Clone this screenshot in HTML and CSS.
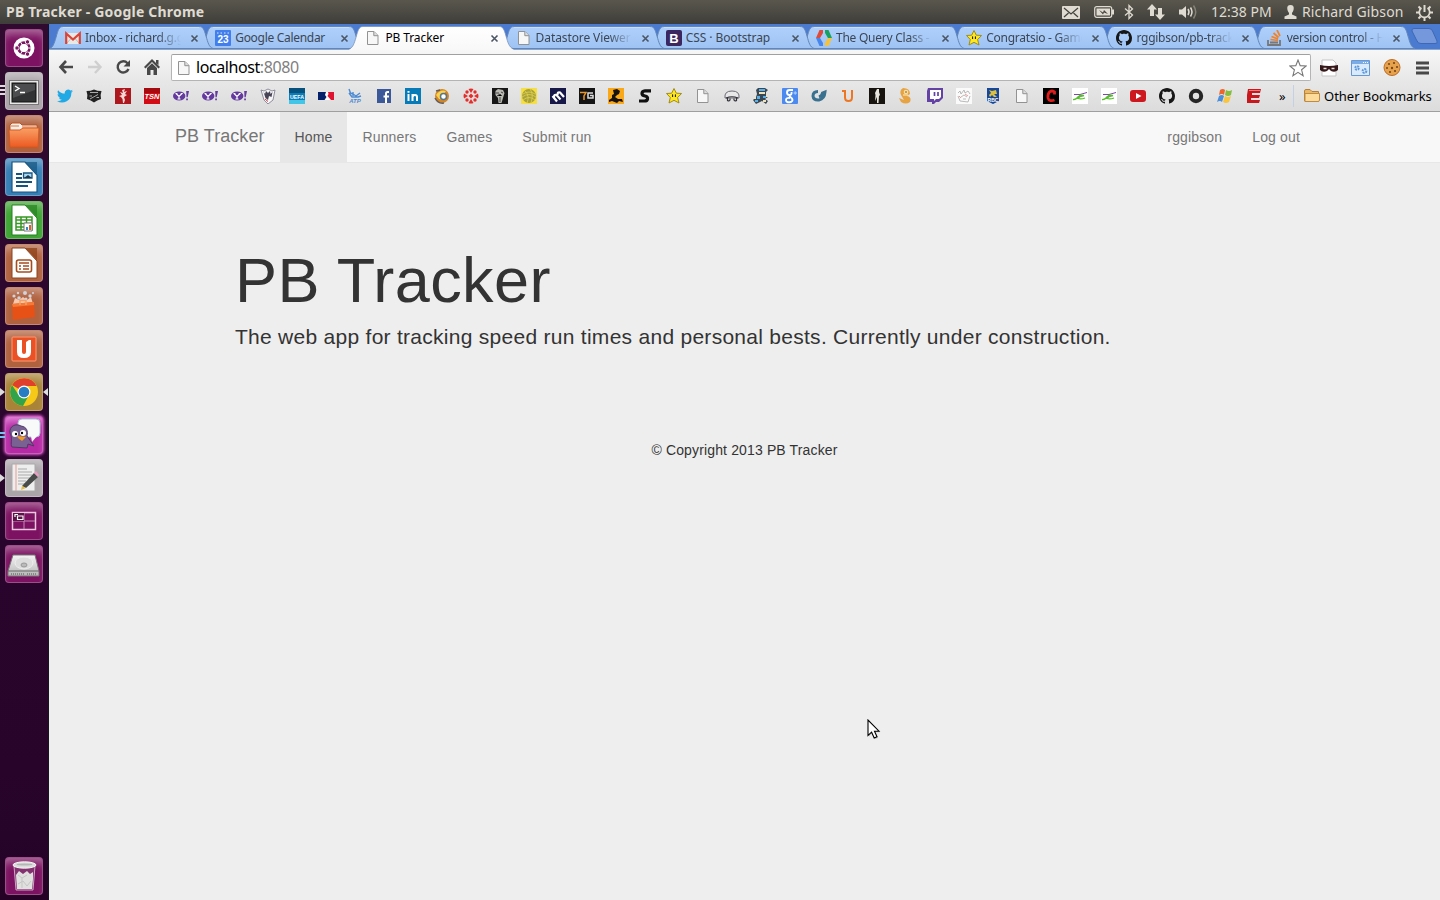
FILE: index.html
```html
<!DOCTYPE html>
<html lang="en">
<head>
<meta charset="utf-8">
<title>PB Tracker</title>
<link rel="stylesheet" href="styles.css">
</head>
<body>
<svg class="defs" width="0" height="0">
  <defs>
    <linearGradient id="tabfill" x1="0" y1="0" x2="0" y2="1"><stop offset="0" stop-color="#b0d0fb"/><stop offset="1" stop-color="#9ec3f3"/></linearGradient>
    <linearGradient id="activefill" x1="0" y1="0" x2="0" y2="1"><stop offset="0" stop-color="#fff"/><stop offset="1" stop-color="#f8f8f8"/></linearGradient>
    <linearGradient id="orange" x1="0" y1="0" x2="0" y2="1"><stop offset="0" stop-color="#f8a065"/><stop offset="1" stop-color="#ed5a22"/></linearGradient>
    <linearGradient id="metal" x1="0" y1="0" x2="0" y2="1"><stop offset="0" stop-color="#f5f5f5"/><stop offset="1" stop-color="#b5b5b5"/></linearGradient>
  </defs>
  <symbol id="tab" viewBox="0 0 166 25"><path d="M1 23.500C4 22 5 19 7 12.500C9 5 10 1.500 14 1.500H150C154 1.500 155 4 157 11C159 18 160 22 164 23.500Z" fill="url(#tabfill)" stroke="#6286b8"/><path d="M14 2.500H150" stroke="#c6defd"/></symbol>
  <symbol id="tab-active" viewBox="0 0 166 25"><path d="M0 25C4 22 5 19 7 12.500C9 5 10 1.500 14 1.500H150C154 1.500 155 4 157 11C159 18 160 22 165 25Z" fill="url(#activefill)"/><path d="M1 23.500C4 22 5 19 7 12.500C9 5 10 1.500 14 1.500H150C154 1.500 155 4 157 11C159 18 160 22 164 23.500" fill="none" stroke="#7692bd" stroke-width=".8"/></symbol>
  <symbol id="close" viewBox="0 0 9 9"><path d="M1.500 1.500L7.500 7.500M7.500 1.500L1.500 7.500" stroke="#4b5563" stroke-width="1.600"/></symbol>
  <symbol id="page" viewBox="0 0 16 16"><path d="M2.500 1.500H9L13 5.500V14.500H2.500Z" fill="#f7f7f7" stroke="#929292"/><path d="M8.800 1.500V5.700H13" fill="#ddd" stroke="#929292"/></symbol>
  <symbol id="star" viewBox="0 0 16 16"><path d="M8 .5L10.300 5.200L15.600 5.500L11.600 9.500L13 15L8 12.300L3 15L4.300 9.500L.5 5.500L5.700 5.200Z" fill="#ffe81c" stroke="#9a830b" stroke-width=".9"/><path d="M6.600 6.400V9M9.400 6.400V9" stroke="#111"/></symbol>
  <symbol id="github" viewBox="0 0 16 16"><path fill="#161616" d="M8 0C3.580 0 0 3.580 0 8c0 3.540 2.290 6.530 5.470 7.590.4.07.55-.17.55-.38 0-.19-.01-.82-.01-1.490-2.010.37-2.530-.49-2.690-.94-.09-.23-.48-.94-.82-1.130-.28-.15-.68-.52-.01-.53.63-.01 1.080.58 1.230.82.72 1.210 1.870.87 2.330.66.07-.52.28-.87.51-1.070-1.780-.2-3.640-.89-3.640-3.950 0-.87.31-1.590.82-2.150-.08-.2-.36-1.020.08-2.120 0 0 .67-.21 2.200.82.64-.18 1.320-.27 2-.27s1.360.09 2 .27c1.530-1.040 2.200-.82 2.200-.82.44 1.100.16 1.920.08 2.120.51.56.82 1.270.82 2.150 0 3.070-1.870 3.750-3.650 3.950.29.25.54.73.54 1.480 0 1.070-.01 1.930-.01 2.200 0 .21.15.46.55.38A8.010 8.010 0 0016 8c0-4.420-3.580-8-8-8z"/></symbol>
  <symbol id="yahoo" viewBox="0 0 16 16"><ellipse cx="6.200" cy="8" rx="6.200" ry="4.600" fill="#643a9e"/><path d="M3 5.500L6 8.400L9 5.500M6 8.200V11M4.500 11H7.500M2.500 5.500H4.400M7.700 5.500H9.700" stroke="#fff" stroke-width="1.200" fill="none"/><path d="M13.200 3H16L14.700 9.200H13.500ZM13.200 10.500H14.900V12.300H13.200Z" fill="#643a9e"/></symbol>
  <symbol id="scribble" viewBox="0 0 16 16"><path fill="#fff" d="M0 0H16V16H0Z"/><path d="M2 6.500H8L15 4.500" stroke="#8047a8" stroke-width="1" fill="none"/><path d="M7 7.500H12L8 8.500L6 10.500Q9 11.500 13 10M1 11.500Q4 12 7 8" stroke="#56c02b" stroke-width="1.300" fill="none"/></symbol>
</svg>

<header class="panel">
  <div class="panel-title">PB Tracker - Google Chrome</div>
  <div class="indicators">
    <svg class="i-mail" width="18" height="13" viewBox="0 0 18 13"><rect width="18" height="13" rx="1" fill="#dfdbd2"/><path d="M2 2L9 8L16 2M2 11L6.500 7M16 11L11.500 7" stroke="#45433e" stroke-width="1.300" fill="none"/></svg>
    <svg class="i-batt" width="20" height="12" viewBox="0 0 20 12"><rect x=".7" y=".7" width="17" height="10.600" rx="2" fill="none" stroke="#dfdbd2" stroke-width="1.200"/><path d="M2.500 2.500H16V9.500H2.500ZM18 3.500H20V8.500H18Z" fill="#dfdbd2"/><path d="M5 4L9 6.500L10 4L14 8L10 6.500L9 8.500Z" fill="#45433e"/></svg>
    <svg class="i-bt" width="10" height="16" viewBox="0 0 10 16"><path d="M1 4.500L8.500 11L5 14.500V1.500L8.500 5L1 11.500" fill="none" stroke="#dfdbd2" stroke-width="1.300"/></svg>
    <svg class="i-net" width="18" height="16" viewBox="0 0 18 16"><path d="M5 0L10 5.500H7V12H3V5.500H0ZM13 16L18 10.500H15V4H11V10.500H8Z" fill="#dfdbd2"/></svg>
    <svg class="i-vol" width="19" height="16" viewBox="0 0 19 16"><path d="M0 5.500H3L7 2V14L3 10.500H0Z" fill="#dfdbd2"/><path d="M9 5Q11 8 9 11M11.500 3.500Q14.500 8 11.500 12.500" fill="none" stroke="#dfdbd2" stroke-width="1.500"/><path d="M14.500 1.500Q19 8 14.500 14.500" fill="none" stroke="#858278" stroke-width="1.500"/></svg>
    <span class="clock">12:38 PM</span>
    <svg class="i-user" width="13" height="14" viewBox="0 0 13 14"><path d="M6.500 0C9 0 10 1.500 9.700 4C9.500 6 8.500 7 8 8V9.500L12.500 11.500V14H.5V11.500L5 9.500V8C4.500 7 3.500 6 3.300 4C3 1.500 4 0 6.500 0Z" fill="#dfdbd2"/></svg>
    <span class="user">Richard Gibson</span>
    <svg class="i-gear" width="17" height="17" viewBox="0 0 17 17"><path d="M5.500 4A5.200 5.200 0 1 0 11.500 4" fill="none" stroke="#dfdbd2" stroke-width="1.700"/><path d="M8.500 1V8M0 8.500H3M14 8.500H17M8.500 14V17M2.500 2.500L4.500 4.500M14.500 2.500L12.500 4.500M2.500 14.500L4.500 12.500M14.500 14.500L12.500 12.500" stroke="#dfdbd2" stroke-width="2"/></svg>
  </div>
</header>

<div class="desktop">
<aside class="launcher">
  <div class="tile purple"><svg viewBox="0 0 38 38"><circle cx="19" cy="19" r="10.500" fill="#fff"/><circle cx="19" cy="19" r="5.400" fill="none" stroke="#7c1761" stroke-width="2.700"/><path d="M19 19L29 19M19 19L14 10.300M19 19L14 27.700" stroke="#fff" stroke-width="1"/><circle cx="19" cy="19" r="3.800" fill="#fff"/><g fill="#7c1761" stroke="#fff" stroke-width=".9"><circle cx="12" cy="19" r="2.200"/><circle cx="22.500" cy="12.900" r="2.200"/><circle cx="22.500" cy="25.100" r="2.200"/></g></svg></div>
  <div class="tile grey"><i class="lines"></i><svg viewBox="0 0 38 38"><rect x="4.500" y="8.500" width="29" height="24" fill="#e8e8e8" stroke="#777"/><rect x="7" y="11" width="24" height="19" fill="#303233" stroke="#111"/><path d="M8 12H30V18L8 26Z" fill="#4b4d4e"/><path d="M10 14L14 16.500L10 19M15 20.500H20" fill="none" stroke="#fff" stroke-width="1.400"/></svg></div>
  <div class="tile brown"><svg viewBox="0 0 38 38"><path d="M5 10L7 8H15L17 10H32V32H5Z" fill="#f7f0ea" stroke="#b75424"/><path d="M6 11H14M17 12H31" stroke="#e5743c"/><path d="M4 15H15L18 13H34L33 32H5Z" fill="url(#orange)" stroke="#d85820"/></svg></div>
  <div class="tile blue"><svg viewBox="0 0 38 38"><path d="M20 4H32V16Z" fill="#16547f" opacity=".7"/><path d="M7 4H20L32 17V34H7Z" fill="#fff" stroke="#185581" stroke-width="1.200"/><path d="M11 16H17M11 20H17M11 24H27M11 28H23" stroke="#16547f" stroke-width="1.900"/><path d="M18.500 15H27V20H18.500Z" fill="#a9d8f2" stroke="#16547f" stroke-width="1.300"/><path d="M19 20L23 17L27 20Z" fill="#18354b"/></svg></div>
  <div class="tile green"><svg viewBox="0 0 38 38"><path d="M20 4H32V16Z" fill="#278021" opacity=".7"/><path d="M7 4H20L32 17V34H7Z" fill="#fff" stroke="#278021"/><path d="M11 16H27V29H11ZM11 19H27M11 22.500H27M11 26H27M16 16V29M21.500 16V29" fill="none" stroke="#389625" stroke-width="1.500"/><path d="M19 22H27V30H19Z" fill="#fff" stroke="#777"/><path d="M21 26H23V29H21Z" fill="#338aca"/><path d="M24 24H26V29H24Z" fill="#df602b"/></svg></div>
  <div class="tile brown"><svg viewBox="0 0 38 38"><path d="M20 4H32V16Z" fill="#8b3f14" opacity=".7"/><path d="M7 4H20L32 17V34H7Z" fill="#fff" stroke="#8c431d"/><rect x="11.500" y="16" width="15" height="12" rx="2" fill="#fff" stroke="#a44e20" stroke-width="1.600"/><path d="M14 19H24M14 22H16M18 22H24M14 25H16M18 25H24" stroke="#a44e20" stroke-width="1.500"/></svg></div>
  <div class="tile brown"><svg viewBox="0 0 38 38"><path d="M8 17L10 11L14 13L18 10L22 13L26 10L28 17Z" fill="#f8c7ae"/><g fill="#cfd3db"><circle cx="9" cy="9" r="1.600"/><circle cx="13" cy="6" r="1.200"/><circle cx="20" cy="6" r="2"/><circle cx="25" cy="9" r="1.700"/><circle cx="14" cy="11" r="1.800"/><circle cx="28" cy="6" r="1"/><circle cx="21" cy="12" r="1.500"/></g><path d="M7 17L29 15L30 30L8 33Z" fill="#e75115"/><path d="M7 17L29 15V18L8 20Z" fill="#f47a39"/><path d="M15 18V13.500H21V18" stroke="#f5a061" stroke-width="1.500" fill="none"/></svg></div>
  <div class="tile brown"><svg viewBox="0 0 38 38"><rect x="7" y="7" width="24" height="24" rx="1" fill="#ea5125" stroke="#ff9a74"/><path d="M12 10H17V22Q17 24 19 24Q21 24 21 22V12L24 10H26V22Q26 28 19 28Q12 28 12 22Z" fill="#fff"/></svg></div>
  <div class="tile gold"><i class="arrow"></i><i class="arrow right"></i><svg viewBox="0 0 38 38"><circle cx="19" cy="19" r="14" fill="#f6c817"/><path d="M19 19L7 12A14 14 0 0 1 31.500 13H19Z" fill="#df3f2c"/><path d="M7 12A14 14 0 0 0 18 33L24 22L13 21Z" fill="#32a34a"/><circle cx="19" cy="19" r="6.500" fill="#fff"/><circle cx="19" cy="19" r="5.300" fill="#267dc2"/></svg></div>
  <div class="tile pink"><i class="lines cyan"></i><svg viewBox="0 0 38 38"><rect x="13" y="3" width="22" height="18" rx="4" fill="#f8fafa" stroke="#a6c5d1"/><path d="M26 20L27 26L32 20Z" fill="#f8fafa"/><path d="M7 31C5 29 8 22 5 17C4 10 11 7 16 10C22 11 23 15 22 20L29 30L23 28L22 32Z" fill="#796293" stroke="#4e3963"/><circle cx="10" cy="18" r="3" fill="#fff"/><circle cx="18" cy="17" r="3" fill="#fff"/><circle cx="11" cy="18" r="1.200"/><circle cx="17" cy="17" r="1.200"/><path d="M12 20L21 21L17 25L13 22Z" fill="#f29b21"/></svg></div>
  <div class="tile grey"><i class="arrow"></i><svg viewBox="0 0 38 38"><path d="M7 5H30V32H7Z" fill="#eee" stroke="#aaa"/><path d="M11 5V32" stroke="#eb9b92"/><path d="M13 10H22M13 13H27M13 16H27M13 19H25M13 22H21M13 25H20" stroke="#aaa"/><path d="M17 27L29 14L33 18L21 29Z" fill="#484b4a"/><path d="M29 14L31 12L34 16L33 18Z" fill="#eb9cc3"/><path d="M17 27L16 31L21 29Z" fill="#e4bd40"/></svg></div>
  <div class="tile purple"><svg viewBox="0 0 38 38"><path d="M7.500 10.500H30.500V27.500H7.500Z" fill="none" stroke="#e8c7df" stroke-width="1.500"/><path d="M19 11V27M8 19H30" stroke="#c58ab7"/><path d="M8 11H19V19H8Z" fill="#5b1348"/><path d="M10 15V12.500H13M12.500 14H18V17.500H12.500Z" fill="none" stroke="#fff" stroke-width="1.200"/></svg></div>
  <div class="tile purple"><svg viewBox="0 0 38 38"><path d="M8 10H30L34 26V31H3V26Z" fill="url(#metal)" stroke="#777"/><path d="M3 26H34" stroke="#666"/><ellipse cx="19" cy="18" rx="9" ry="6" fill="#ddd" stroke="#eee"/><ellipse cx="19" cy="20" rx="3" ry="2" fill="#bbb" stroke="#999"/><path d="M6 29H20M22 29H32" stroke="#555" stroke-dasharray="1 1"/></svg></div>
  <div class="tile purple trash"><svg viewBox="0 0 38 38"><path d="M9 9H30L28 33H11Z" fill="#84316f" stroke="#c9a5c2"/><path d="M11 18L14 14L18 17L22 14L25 17L28 15V22L27 32H12Z" fill="#e0e0df"/><path d="M13 18L17 21L22 18M13 27L18 24L22 29L26 24M17 21V31" stroke="#c5c5c5" fill="none"/><ellipse cx="19.500" cy="8" rx="11.500" ry="3.200" fill="#ddd" stroke="#f5f5f5"/><ellipse cx="19.500" cy="7.500" rx="8" ry="1" fill="#b5b5b5"/></svg></div>
</aside>

<div class="browser">
  <nav class="tabs">
    <div class="tab z9"><svg class="shape"><use href="#tab"/></svg><svg class="fav" viewBox="0 0 16 16"><path d="M1 3H15V14H1Z" fill="#e8e8e4"/><path d="M1 14L6 8.500M15 14L10 8.500" stroke="#bbb"/><path d="M1.200 14V3.500L8 9.500L14.800 3.500V14" fill="none" stroke="#db4437" stroke-width="2.200"/></svg><span class="label l1">Inbox - richard.g.g</span><svg class="x"><use href="#close"/></svg></div>
    <div class="tab z8"><svg class="shape"><use href="#tab"/></svg><svg class="fav" viewBox="0 0 16 16"><rect width="16" height="16" rx="1" fill="#427fed"/><path d="M2 3H14" stroke="#d8e6ff" stroke-dasharray="1.500 2"/><text x="8" y="13" text-anchor="middle" class="t cal">23</text></svg><span class="label l2">Google Calendar</span><svg class="x"><use href="#close"/></svg></div>
    <div class="tab active"><svg class="shape"><use href="#tab-active"/></svg><svg class="fav"><use href="#page"/></svg><span class="label l3">PB Tracker</span><svg class="x"><use href="#close"/></svg></div>
    <div class="tab z6"><svg class="shape"><use href="#tab"/></svg><svg class="fav"><use href="#page"/></svg><span class="label l4">Datastore Viewer</span><svg class="x"><use href="#close"/></svg></div>
    <div class="tab z5"><svg class="shape"><use href="#tab"/></svg><svg class="fav" viewBox="0 0 16 16"><rect width="16" height="16" rx="2" fill="#3c2660"/><text x="8" y="12.500" text-anchor="middle" class="t b">B</text></svg><span class="label l5">CSS · Bootstrap</span><svg class="x"><use href="#close"/></svg></div>
    <div class="tab z4"><svg class="shape"><use href="#tab"/></svg><svg class="fav" viewBox="0 0 16 16"><path d="M3.500 0H7V3L4 8H0Z" fill="#df4b38"/><path d="M0 8H4L7 13V16H3.500Z" fill="#4787ed"/><path d="M9 0H12.500L16 8H12L9 3Z" fill="#19a15f"/><path d="M12 8H16L12.500 16H9V13Z" fill="#f6c23b"/></svg><span class="label l6">The Query Class -</span><svg class="x"><use href="#close"/></svg></div>
    <div class="tab z3"><svg class="shape"><use href="#tab"/></svg><svg class="fav"><use href="#star"/></svg><span class="label l7">Congratsio - Game</span><svg class="x"><use href="#close"/></svg></div>
    <div class="tab z2"><svg class="shape"><use href="#tab"/></svg><svg class="fav"><use href="#github"/></svg><span class="label l8">rggibson/pb-track</span><svg class="x"><use href="#close"/></svg></div>
    <div class="tab z1"><svg class="shape"><use href="#tab"/></svg><svg class="fav" viewBox="0 0 16 16"><path d="M1 10V15H13V10M3 12.500H11" fill="none" stroke="#777" stroke-width="1.800"/><path d="M3.500 9.500L11 10.500M4.500 6.500L11 9M6.500 3L11.500 7.500M10 0L13 6" stroke="#f48024" stroke-width="1.700"/></svg><span class="label l9">version control - H</span><svg class="x"><use href="#close"/></svg></div>
    <svg class="newtab" width="28" height="17" viewBox="0 0 28 17"><path d="M3 .5H18Q21 .5 22 4L26 13Q27 16 24 15.500H10Q7 16 5.500 12L1 3Q.5 .5 3 .5Z" fill="#7598dc" stroke="#3e68b3"/></svg>
  </nav>

  <div class="toolbar">
    <div class="navbtns">
      <svg viewBox="0 0 16 16"><path d="M15 8H3M8 2L2.500 8L8 14" fill="none" stroke="#484848" stroke-width="2.600"/></svg>
      <svg viewBox="0 0 16 16"><path d="M1 8H13M8 2L13.500 8L8 14" fill="none" stroke="#cfcfcf" stroke-width="2.400"/></svg>
      <svg viewBox="0 0 16 16"><path d="M12.500 4.200A5.600 5.600 0 1 0 13.500 10" fill="none" stroke="#484848" stroke-width="2.400"/><path d="M15 1V7.500H8.500Z" fill="#484848"/></svg>
      <svg viewBox="0 0 16 16"><path d="M8 0L16 8L14.500 9.500L8 3L1.500 9.500L0 8ZM12 1H14.500V6L12 4Z" fill="#484848"/><path d="M3 9L8 4.300L13 9V16H9.500V11H6.500V16H3Z" fill="#484848"/></svg>
    </div>
    <div class="omnibox">
      <svg class="fav"><use href="#page"/></svg>
      <span class="url">localhost<span class="port">:8080</span></span>
      <svg class="bstar" width="18" height="18" viewBox="0 0 18 18"><path d="M9 1L11.200 6.600L17.200 7L12.600 10.800L14.100 16.700L9 13.400L3.900 16.700L5.400 10.800L.8 7L6.800 6.600Z" fill="#fff" stroke="#777" stroke-width="1.100"/></svg>
    </div>
    <svg class="ext e1" width="18" height="18" viewBox="0 0 18 18"><path d="M2 1H13L16 4V17H2Z" fill="#fff" stroke="#c5c5c5"/><path d="M0 6Q9 8 18 6V11Q15 14 11 12L9 10L7 12Q3 14 0 11Z" fill="#351819"/><path d="M3.500 9.500H6.500M11.500 9.500H14.500" stroke="#e8dede" stroke-width="1.300"/></svg>
    <svg class="ext e2" width="19" height="16" viewBox="0 0 19 16"><path d="M.5 .5H18.500V15.500H.5Z" fill="#d9eafd" stroke="#6898d4"/><path d="M1 1H18V4H1Z" fill="#7cace5"/><path d="M12 2.500H17" stroke="#fff" stroke-dasharray="1 1"/><g fill="none" stroke="#5b97d8" stroke-width="2" stroke-dasharray="1.800 .8"><circle cx="6" cy="8" r="1.800"/><circle cx="13.500" cy="11" r="1.900"/></g></svg>
    <svg class="ext e3" width="18" height="17" viewBox="0 0 18 17"><circle cx="9" cy="8.500" r="8" fill="#e7a34c" stroke="#bd6b29"/><g fill="#794421"><circle cx="6" cy="5" r="1.100"/><circle cx="11" cy="4" r="1.100"/><circle cx="4" cy="9" r="1"/><circle cx="9" cy="9" r="1.200"/><circle cx="14" cy="8" r="1.100"/><circle cx="7" cy="13" r="1.100"/><circle cx="12" cy="12" r="1.100"/></g></svg>
    <svg class="ext e4" width="13" height="14" viewBox="0 0 13 14"><path d="M0 2H13M0 7H13M0 12H13" stroke="#484848" stroke-width="2.800"/></svg>
  </div>

  <div class="bookmarks">
    <div class="marks">
    <svg viewBox="0 0 24 24"><path fill="#20a9e5" d="M24 4.600a10 10 0 0 1-2.800.8 5 5 0 0 0 2.100-2.700 10 10 0 0 1-3.100 1.200 4.900 4.900 0 0 0-8.400 4.500A14 14 0 0 1 1.700 3.200a4.900 4.900 0 0 0 1.500 6.500 5 5 0 0 1-2.200-.6 4.900 4.900 0 0 0 4 4.900 5 5 0 0 1-2.300.1 4.900 4.900 0 0 0 4.600 3.400A9.900 9.900 0 0 1 0 19.500 14 14 0 0 0 21.500 7a10 10 0 0 0 2.500-2.400z"/></svg>
    <svg viewBox="0 0 16 16"><path d="M.5 3Q5 3 8 1.500Q11 3 15.500 3Q14 7 15 11Q11 12 8 14.500Q5 12 1 11Q2 7 .5 3Z" fill="#222"/><path d="M4 4.500H12M4 11L12 6.500M3.500 8H6M10.500 9.500H13" stroke="#aaa" stroke-width="1"/></svg>
    <svg viewBox="0 0 16 16"><path fill="#ad171e" d="M0 0H16V16H0Z"/><path d="M7 2L10 1L9 4L12 3L10 6L12 7L9 9L10 12L9 15H8L7.500 11L6 9L4 8L7 7L5 4L8 5Z" fill="#f6d7d4"/></svg>
    <svg viewBox="0 0 16 16"><path fill="#d30b14" d="M0 0H16V16H0Z"/><path d="M0 0H16V5H0Z" fill="#a30b10"/><text x="8" y="11" text-anchor="middle" textLength="15" lengthAdjust="spacingAndGlyphs" class="t tsn">TSN</text></svg>
    <svg><use href="#yahoo"/></svg><svg><use href="#yahoo"/></svg><svg><use href="#yahoo"/></svg>
    <svg viewBox="0 0 16 16"><path d="M1 2L4 3L8 1L12 3L15 2L13 12L8 16L4 12Z" fill="#f6f6f6" stroke="#77758a" stroke-width=".8"/><path d="M3.500 4L5 6L6 3L8 5L10 3L10.500 6L12.500 4L11.500 9L9 8L8 12L5.500 10Z" fill="#484356"/><path d="M5 11L8 13.500" stroke="#ca3846"/></svg>
    <svg viewBox="0 0 16 16"><path fill="#087dba" d="M0 0H16V16H0Z"/><path fill="#07517f" d="M0 0H16V5H0Z"/><path fill="#42c5e7" d="M0 12H16V16H0Z"/><text x="8" y="10.500" text-anchor="middle" textLength="14" lengthAdjust="spacingAndGlyphs" class="t uefa">UEFA</text></svg>
    <svg viewBox="0 0 16 16"><path fill="#05216b" d="M0 4H9V12H0Z"/><path fill="#df1430" d="M9 4H16V12H9Z"/><path d="M8 4H10L10.500 6L9.500 8L13 12H6.500L8.500 9L7 7Z" fill="#fff"/></svg>
    <svg viewBox="0 0 16 16"><path d="M2 1L3.500 5L6 6L9 8L13 5M2 5L5 9H11L14 8M6 4V8" stroke="#4c8ad3" stroke-width="1.400" fill="none"/><text x="8" y="15" text-anchor="middle" class="t atp">ATP</text></svg>
    <svg viewBox="0 0 16 16"><path fill="#3b5998" d="M1 1H15V15H1Z"/><path d="M13 4H11.500Q10 4 10 5.500V15M7.500 8.500H13" stroke="#fff" stroke-width="2" fill="none"/></svg>
    <svg viewBox="0 0 16 16"><path fill="#077bb7" d="M0 0H16V16H0Z"/><path d="M3.500 6V13M3.500 3V4.800M7.500 6V13M7.500 9Q8 7 10 7Q12 7 12 9V13" fill="none" stroke="#fff" stroke-width="2"/></svg>
    <svg viewBox="0 0 16 16"><circle cx="8" cy="8" r="7" fill="#d58521"/><path d="M2 7Q6 1 12 3L9 7L12 12L5 11Z" fill="#f8d250"/><circle cx="9.500" cy="8.500" r="3" fill="#fff" stroke="#56758f" stroke-width="1.500"/><path d="M1 10Q4 16 10 15M2 3L6 2" stroke="#625c5e" stroke-width="1.500" fill="none"/></svg>
    <svg viewBox="0 0 16 16"><g fill="#e32f2c"><path d="M5.500 1Q8 0 10.500 1L8 5ZM5.500 15Q8 16 10.500 15L8 11ZM1 5.500Q0 8 1 10.500L5 8ZM15 5.500Q16 8 15 10.500L11 8Z"/><circle cx="4" cy="4" r="1.700"/><circle cx="12" cy="4" r="1.700"/><circle cx="4" cy="12" r="1.700"/><circle cx="12" cy="12" r="1.700"/><path d="M8 5.500L10.500 8L8 10.500L5.500 8Z"/></g></svg>
    <svg viewBox="0 0 16 16"><path fill="#171717" d="M0 0H16V16H0Z"/><path d="M3.500 3L6 1L11 2L12.500 5L11 10L9.500 15H6.500L6 10L3.500 7Z" fill="#b9b9b2"/><path d="M4 5H7M9 4L11 5M5 8L8 6L10 8M8 9V14" stroke="#444"/></svg>
    <svg viewBox="0 0 16 16"><path fill="#f6df42" d="M0 0H16V16H0Z"/><circle cx="8" cy="8" r="7" fill="#a9a13c"/><path d="M2 6Q8 2 14 6M1 9Q8 4 15 9M2 12Q8 7 14 12M4 3Q9 8 6 15M9 1Q13 6 10 15" fill="none" stroke="#e0d24b" stroke-width=".8"/></svg>
    <svg viewBox="0 0 16 16"><path fill="#171748" d="M0 0H16V16H0Z"/><path d="M2.500 8L7 13.500M4 9.500Q4 6 6.500 7L10.500 11.500M7.500 7Q7.500 3.500 10 4.500L14 9" fill="none" stroke="#fff" stroke-width="2.200"/></svg>
    <svg viewBox="0 0 16 16"><path fill="#141414" d="M0 0H16V16H0Z"/><path d="M1 4.500H7L5 8V12" fill="none" stroke="#e79428" stroke-width="1.500"/><path d="M14 5H9V10H14V7.500H11" fill="none" stroke="#ddd" stroke-width="1.500"/></svg>
    <svg viewBox="0 0 16 16"><path fill="#f8a819" d="M0 0H16V16H0Z"/><path d="M5 2L9 1L12 3L11 6L9 7L7 9L10 11L14 11L15 14L11 13L9 15L4 13L1 14V12L4 10L4 7L6 6Z" fill="#17110c"/></svg>
    <svg viewBox="0 0 16 16"><path d="M14 2.800H8Q5 3 5 5.500Q5 7.500 8 8Q11 8.500 10.500 11Q10 13 7.500 13H2" fill="none" stroke="#111" stroke-width="3.200"/></svg>
    <svg><use href="#star"/></svg><svg><use href="#page"/></svg>
    <svg viewBox="0 0 16 16"><path d="M1 10Q0 3 8 3Q16 3 15 10Z" fill="#e8e8e8" stroke="#6c6b74"/><path d="M2 10Q8 7.500 14 10M3.500 10V12.500Q5 13.500 6 12V10.500M10 10.500V12Q11 13.500 12.500 12.500V10" fill="none" stroke="#33323b" stroke-width="1.200"/></svg>
    <svg viewBox="0 0 16 16"><path d="M5 0H12L15 2L13 4V7L15 9L12 11L15 13L13 16L9 13L3 16L0 12L3 9L4 6L3 2Z" fill="#3a4854"/><path d="M6 1H12V3H6ZM4 8H7V11H4ZM10 8H13V10H10ZM2 12H5V14H2Z" fill="#58b1e9"/><path d="M6 4H12V6H6ZM1 9H3V11H1ZM10 12H13V14H10ZM13 7H15V9H13Z" fill="#f1e2ba"/></svg>
    <svg viewBox="0 0 16 16"><rect width="16" height="16" rx="1" fill="#4d8af0"/><path d="M11 2H7.500Q5 2 5 4.500Q5 7 7.500 7Q10 7 9.500 4M8 7Q7 8.500 9 9.500Q12 12 9 14Q4 15 4 12Q4 9.500 8 10" fill="none" stroke="#fff" stroke-width="1.900"/><path d="M11.500 5H15M13.200 3.300V6.700" stroke="#b9d4ff"/></svg>
    <svg viewBox="0 0 16 16"><path d="M7 3.500Q2 3.500 2 8Q2.500 12.500 8 12Q13.500 11 14 4L11.500 5Q11 8 8 9" fill="none" stroke="#3a718f" stroke-width="3"/></svg>
    <svg viewBox="0 0 16 16"><path d="M2 3H5V9.500Q5 13 8.500 13Q12 13 12 9.500V2" fill="none" stroke="#ee7623" stroke-width="2"/></svg>
    <svg viewBox="0 0 16 16"><path fill="#17140f" d="M0 0H16V16H0Z"/><path d="M8 1H10L10 4L11 7L10 8L9.500 15H8L8 9L6 13L6.500 7L6 5Z" fill="#e8e5dc"/></svg>
    <svg viewBox="0 0 16 16"><path d="M5 0Q12 0 12 6L9 8Q14 9 12 14Q8 17 3 14L1 10L6 12L3 7Q1 2 5 0Z" fill="#e7a342"/><circle cx="8" cy="4" r="2.300" fill="#f9dfa4"/><path d="M7 4H9" stroke="#8f5a18"/><path d="M5 7H10" stroke="#fff0bd"/></svg>
    <svg viewBox="0 0 16 16"><path d="M1 0H16V10L12 14H9L7 16H5V14H0V3Z" fill="#6441a5"/><path d="M3 2H14V9L12 11H9L7 13V11H3Z" fill="#fff"/><path d="M7.500 4V8M11 4V8" stroke="#6441a5" stroke-width="1.700"/></svg>
    <svg viewBox="0 0 16 16"><path fill="#fafafa" d="M0 0H16V16H0Z"/><path d="M2 5L4 3L5 6L8 2L9 5L12 3L14 6M2 8L4 13L12 14L14 8M5 9L8 7L11 9M7 11H10" fill="none" stroke="#aaa" stroke-width=".8"/><path d="M3 8L5 10M9 6L12 8" stroke="#e99"/></svg>
    <svg viewBox="0 0 16 16"><path d="M2 0H14V13L8 16L2 13Z" fill="#164798"/><path d="M4 2L7 3L11 2L12 6L9 6L12 9H9L7 7L5 9L4 7L6 5Z" fill="#dec03f"/><text x="8" y="14" text-anchor="middle" class="t rbc">RBC</text></svg>
    <svg><use href="#page"/></svg>
    <svg viewBox="0 0 16 16"><path d="M0 0H16V16H0Z"/><path d="M11.500 6.500V4Q9 2 6.500 4Q4.500 6 5 10Q6 14 11.500 12" fill="none" stroke="#e01d1b" stroke-width="2.800"/></svg>
    <svg><use href="#scribble"/></svg><svg><use href="#scribble"/></svg>
    <svg viewBox="0 0 16 16"><rect y="2" width="16" height="12" rx="3" fill="#cc181e"/><path d="M6 5L11.500 8L6 11Z" fill="#fff"/></svg>
    <svg><use href="#github"/></svg>
    <svg viewBox="0 0 16 16"><circle cx="8" cy="8" r="5.200" fill="none" stroke="#252525" stroke-width="4"/></svg>
    <svg viewBox="0 0 16 16"><path d="M3 2Q6 0 8 2L7 7Q5 5 2 7Z" fill="#ee652e"/><path d="M9 2Q12 4 15 2L14 7Q11 9 8 7Z" fill="#85bd3d"/><path d="M2 8Q5 6 7 8L5 14Q3 12 0 14Z" fill="#4b8fda"/><path d="M8 8Q11 10 14 8L12 14Q9 16 6 14Z" fill="#f9c53f"/></svg>
    <svg viewBox="0 0 16 16"><path d="M2 1H15L14 5H6V7H14L13 10H5V12H14L13 15H1V7Z" fill="#c8181e"/><path d="M3 2.500H14" stroke="#f47a79"/></svg>
    </div>
    <span class="more">»</span>
    <i class="sep"></i>
    <svg class="folder" viewBox="0 0 16 16"><path d="M.5 4V3Q.5 1.500 2 1.500H6L8 3.500H14.500V13.500H1.500Q.5 13.500 .5 12Z" fill="#e9b765" stroke="#b68038"/><path d="M1 5.500H15.500V12Q15.500 13.500 14 13.500H1Z" fill="#fddc9b" stroke="#bd8b45"/></svg>
    <span class="other">Other Bookmarks</span>
  </div>

  <main class="web">
    <div class="navbar">
      <div class="container">
        <a class="brand">PB Tracker</a>
        <a class="nav on">Home</a><a class="nav">Runners</a><a class="nav">Games</a><a class="nav">Submit run</a>
        <span class="grow"></span>
        <a class="nav">rggibson</a><a class="nav">Log out</a>
      </div>
    </div>
    <section class="jumbo">
      <h1>PB Tracker</h1>
      <p>The web app for tracking speed run times and personal bests. Currently under construction.</p>
    </section>
    <footer>© Copyright 2013 PB Tracker</footer>
  </main>
</div>
</div>
<svg class="cursor" width="16" height="24" viewBox="0 0 16 24"><path d="M2 2V17.500L5.500 14L8 20L11 19L8.500 13.200H13Z" fill="#888" opacity=".4"/><path d="M1 1V16.500L4.600 13.200L7.200 19L10 17.800L7.500 12.200H12Z" fill="#fff" stroke="#000" stroke-width="1.100"/></svg>
</body>
</html>
```
FILE: styles.css
```css
* { box-sizing: border-box; }
body { margin: 0; width: 1440px; height: 900px; overflow: hidden; position: relative; font-family: "Noto Sans", sans-serif; background: #eee; }
svg { display: block; flex: none; }
.defs { position: absolute; }

.panel { height: 24px; display: flex; justify-content: space-between; align-items: center; padding: 0 7px 0 6px; background: linear-gradient(#59574d, #3e3d39); color: #dfdbd2; white-space: nowrap; }
.panel-title { font-size: 14px; font-weight: 700; letter-spacing: .2px; line-height: 24px; }
.indicators { display: flex; align-items: center; font-size: 14px; line-height: 24px; }
.i-batt { margin-left: 14px; }
.i-bt { margin-left: 10px; }
.i-net { margin-left: 13px; }
.i-vol { margin-left: 14px; }
.clock { margin-left: 13px; width: 61px; letter-spacing: 0; }
.i-user { margin-left: 12px; }
.user { margin-left: 5px; width: 102px; letter-spacing: .15px; }
.i-gear { margin-left: 12px; }

.desktop { display: flex; height: 876px; }
.launcher { width: 49px; flex: none; display: flex; flex-direction: column; gap: 5px; padding: 5px 0 5px 5px; background: linear-gradient(#310b2f, #29042c 60%, #28042a 85%, #240226); border-right: 1px solid #17131f; }
.tile { width: 38px; height: 38px; border-radius: 4px; position: relative; border: 1px solid rgba(255,255,255,.25); box-shadow: inset 0 8px 8px -4px rgba(255,255,255,.38); }
.tile svg { width: 38px; height: 38px; margin: -1px; }
.purple { background-color: #7c1261; }
.grey { background-color: #aaa4a9; }
.brown { background-color: #b0623f; }
.blue { background-color: #347fb5; }
.green { background-color: #3ea433; }
.gold { background-color: #a88338; }
.pink { background-color: #b62ba5; box-shadow: 0 0 3px 1px #e159d0, inset 0 8px 8px -4px #e68bdb; }
.trash { margin-top: auto; }
.arrow { position: absolute; left: -6px; top: 14px; border: 4px solid transparent; border-left: 5px solid #ddd; border-right: 0; }
.arrow.right { left: auto; right: -6px; border-left: 0; border-right: 5px solid #ddd; }
.lines { position: absolute; left: -6px; top: 12px; width: 5px; height: 11px; background: repeating-linear-gradient(#ddd 0 2px, transparent 2px 4px); }
.lines.cyan { top: 15px; height: 6px; background: repeating-linear-gradient(#75c5f0 0 2px, transparent 2px 4px); }

.browser { flex: 1; min-width: 0; display: flex; flex-direction: column; }
.tabs { height: 26px; display: flex; align-items: flex-end; background: #4b7bd1; border-bottom: 1px solid #8ba6cf; position: relative; z-index: 0; }
.tab { position: relative; width: 166px; height: 25px; margin-right: -15.800px; flex: none; display: flex; align-items: center; padding: 1px 16px 0; margin-bottom: -1px; }
.tab.active { z-index: 12; }
.z9 { z-index: 9; }
.z8 { z-index: 8; }
.z6 { z-index: 6; }
.z5 { z-index: 5; }
.z4 { z-index: 4; }
.z3 { z-index: 3; }
.z2 { z-index: 2; }
.z1 { z-index: 1; }
.shape { position: absolute; left: 0; top: 0; width: 166px; height: 25px; }
.fav { position: relative; width: 16px; height: 16px; }
.label { position: relative; margin-left: 4px; width: 97px; overflow: hidden; white-space: nowrap; font-size: 12px; line-height: 20px; color: #3c4654; letter-spacing: -.25px; -webkit-mask-image: linear-gradient(90deg, #000 76%, transparent 100%); mask-image: linear-gradient(90deg, #000 76%, transparent 100%); }
.l2, .l3, .l5 { -webkit-mask-image: none; mask-image: none; }
.l3, .l5, .l4 { letter-spacing: -.1px; }
.l2 { letter-spacing: -.3px; }
.active .label { color: #000; }
.x { position: relative; width: 9px; height: 9px; margin-left: 9px; }
.newtab { margin: 0 0 4px 10px; }
.t { fill: #fff; font-family: "Liberation Sans", sans-serif; font-weight: 700; }
.cal { font-size: 10px; }
.b { font-size: 13px; }
.tsn { font-size: 7px; font-style: italic; }
.uefa { font-size: 6px; }
.atp { font-size: 6px; fill: #4c8ad3; font-style: italic; }
.rbc { font-size: 5px; }

.toolbar { height: 32px; display: flex; align-items: center; padding: 3px 11px 0 9px; background: linear-gradient(#f7f7f7, #e7e7e7); }
.navbtns { display: flex; gap: 12.500px; width: 113px; margin-top: -1px; }
.navbtns svg { width: 16px; height: 16px; }
.omnibox { width: 1140px; height: 27px; flex: none; display: flex; align-items: center; padding: 0 3px 0 4px; background: #fff; border: 1px solid #b4b4b4; border-top-color: #a0a0a0; border-radius: 2px; }
.url { flex: 1; margin: -2px 0 0 4px; font-size: 16px; line-height: 24px; letter-spacing: -.42px; color: #000; }
.port { color: #808080; }
.e1 { margin-left: 9px; }
.e2 { margin-left: 13px; }
.e3 { margin-left: 13px; }
.e4 { margin-left: 15px; }

.bookmarks { height: 30px; display: flex; align-items: center; padding: 0 8px 2px; background: linear-gradient(#e7e7e7, #dcdcdc); border-bottom: 1px solid #9f9f9f; font-size: 13px; color: #000; white-space: nowrap; }
.marks { display: flex; gap: 13px; }
.marks svg, .folder { width: 16px; height: 16px; }
.more { width: 8px; margin-left: 17px; }
.sep { width: 1px; height: 22px; margin: 0 10px 0 6px; background: #c5cfe5; }
.other { margin-left: 4px; letter-spacing: -.02px; }

.web { flex: 1; background: #eee; font-family: "Liberation Sans", Arial, sans-serif; color: #333; }
.navbar { height: 51px; background: #f8f8f8; border-bottom: 1px solid #e7e7e7; }
.container { width: 1170px; margin: 0 auto; padding: 0 14.500px 0 15.500px; display: flex; color: #777; }
.brand { font-size: 18px; line-height: 20px; padding: 14px 15px 16px 0; letter-spacing: .05px; }
.nav { font-size: 14px; line-height: 20px; padding: 15px; letter-spacing: .15px; }
.nav.on { background: #e7e7e7; color: #555; }
.grow { flex: 1; }
.jumbo { padding: 81px 186px 0; }
h1 { margin: 0; font-size: 63px; line-height: 72px; font-weight: 400; letter-spacing: .43px; }
p { margin: 6px 0 0; font-size: 21px; line-height: 30px; white-space: nowrap; letter-spacing: .275px; }
footer { margin-top: 88px; text-align: center; font-size: 14px; line-height: 20px; letter-spacing: .14px; }
.cursor { position: absolute; left: 867px; top: 719px; }
```
